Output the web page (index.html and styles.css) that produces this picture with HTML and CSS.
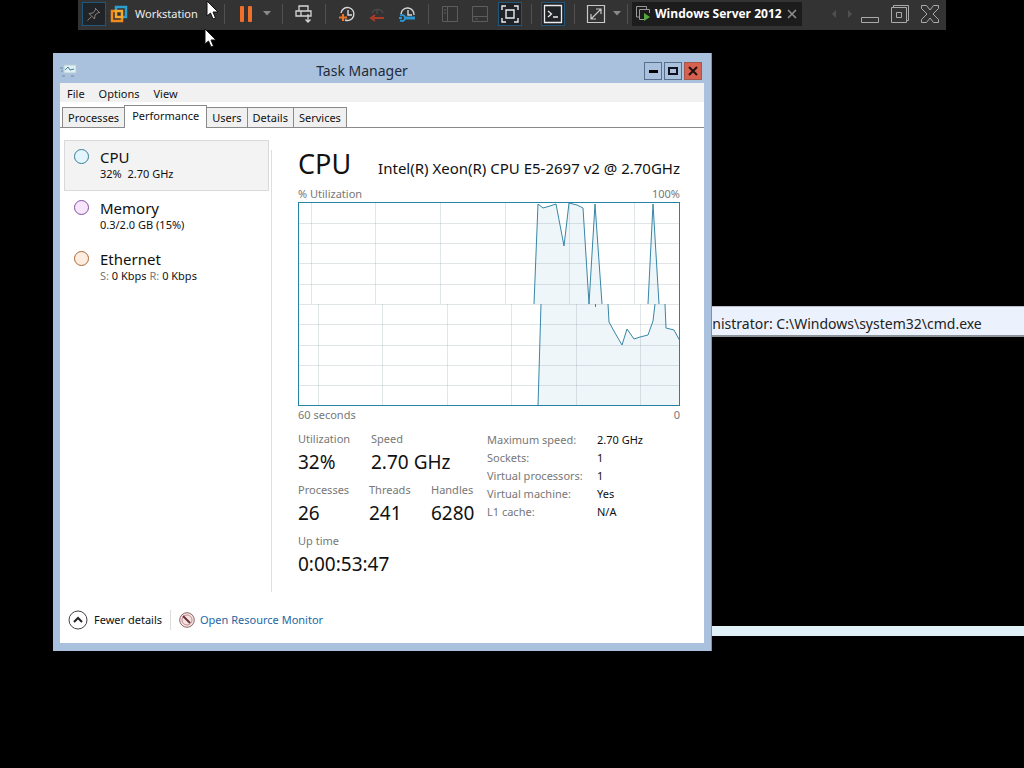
FILE: index.html
```html
<!DOCTYPE html>
<html lang="en">
<head>
<meta charset="utf-8">
<title>Task Manager</title>
<link rel="stylesheet" href="styles.css">
</head>
<body>
<main class="desktop">
  <header class="vmbar">
    <button class="tool tool-on" aria-label="Pin"><svg width="18" height="18" viewBox="0 0 18 18" fill="none" stroke="#8a8078"><path d="M10 3l5 5M11 4L8 8L4 8.500l5.500 5.500L10 10l4-3M6.500 11.500L2.500 15.500"/></svg></button>
    <button class="vm-menu"><svg width="18" height="18" viewBox="0 0 18 18" fill="none" stroke-width="2.500"><path d="M6 6V2h10v10h-4" stroke="#2a9fd0"/><path d="M6 6H2v10h10v-4" stroke="#f08a1c"/><path d="M6 6h6v6H6z" stroke="#f6a72c"/></svg>Workstation</button>
    <span class="sep"></span>
    <button class="tool" aria-label="Pause"><svg width="14" height="16" viewBox="0 0 14 16" fill="#f0702a"><rect x="1" width="4" height="16" rx="1"/><rect x="9" width="4" height="16" rx="1"/></svg></button>
    <button class="caret" aria-label="Power options"><svg width="8" height="5" viewBox="0 0 8 5"><path d="M0 0h8L4 4.500z" fill="#8a8a8a"/></svg></button>
    <span class="sep"></span>
    <button class="tool" aria-label="Send keys"><svg width="18" height="18" viewBox="0 0 18 18" fill="none" stroke="#d6d6d6" stroke-width="1.300"><path d="M4 6V1h9v5M1 6h15v5H1zM6 6v5M13 9v8M10.500 14.500L13 17l2.500-2.500"/></svg></button>
    <span class="sep"></span>
    <div class="tools">
      <button class="tool" aria-label="Take snapshot"><svg width="18" height="18" viewBox="0 0 18 18" fill="none" stroke="#d6d6d6" stroke-width="1.400"><path d="M3 8a6.500 6.500 0 1 1 4 7M10 5v5h4"/><path d="M1 12.500h8M5 9v7" stroke="#e8762c" stroke-width="2"/></svg></button>
      <button class="tool" aria-label="Revert snapshot"><svg width="18" height="18" viewBox="0 0 18 18" fill="none" stroke="#4c4c4c" stroke-width="1.200"><path d="M4 8a6 6 0 0 1 11 0M9 5v4"/><path d="M3 13h13M7 10l-4 3 4 3" stroke="#a93a28" stroke-width="2"/></svg></button>
      <button class="tool" aria-label="Manage snapshots"><svg width="18" height="18" viewBox="0 0 18 18" fill="none" stroke="#d6d6d6" stroke-width="1.400"><path d="M3 9a6.500 6.500 0 1 1 13 1M10 5v5h4"/><path d="M7 13h10" stroke="#2d96d2" stroke-width="3"/><path d="M2 10.500c3-1 5 0 5 2.500s-2 3.500-5 2.500M1 13h3" stroke="#2d96d2" stroke-width="2"/></svg></button>
    </div>
    <span class="sep"></span>
    <div class="tools">
      <button class="tool" aria-label="Library"><svg width="18" height="18" viewBox="0 0 18 18" fill="none" stroke="#5d5d5d"><path d="M1.500 1.500h15v15h-15zM6.500 1.500v15M3 5h2M3 8h2"/></svg></button>
      <button class="tool" aria-label="Thumbnail bar"><svg width="18" height="18" viewBox="0 0 18 18" fill="none" stroke="#5d5d5d"><path d="M1.500 1.500h15v15h-15zM1.500 11.500h15M4 14h3"/></svg></button>
      <button class="tool tool-on" aria-label="Full screen"><svg width="20" height="20" viewBox="0 0 20 20" fill="none" stroke="#ececec" stroke-width="1.400"><path d="M2 6V2h4M14 2h4v4M18 14v4h-4M6 18H2v-4M6 6h8v8H6z"/></svg></button>
    </div>
    <span class="sep"></span>
    <button class="tool tool-on" aria-label="Console"><svg width="20" height="20" viewBox="0 0 20 20" fill="none" stroke="#ececec" stroke-width="1.300"><path d="M1.500 1.500h17v17h-17zM5 7l3.500 3L5 13M10 13h5"/></svg></button>
    <span class="sep"></span>
    <button class="tool" aria-label="Stretch"><svg width="20" height="20" viewBox="0 0 20 20" fill="none" stroke="#c8c8c8" stroke-width="1.200"><path d="M1.500 1.500h17v17h-17zM5 15L15 5M10 5h5v5M5 10v5h5"/></svg></button>
    <button class="caret" aria-label="Stretch options"><svg width="8" height="5" viewBox="0 0 8 5"><path d="M0 0h8L4 4.500z" fill="#8a8a8a"/></svg></button>
    <span class="sep sep-tight"></span>
    <div class="vm-tab"><svg width="15" height="15" viewBox="0 0 15 15" fill="none" stroke="#999"><path d="M3 11H.500V.500h10V3"/><path d="M8 13.500H3.500v-10h10V7"/><path d="M8 7l6 4-6 4z" fill="#55a63a" stroke="none"/></svg><strong>Windows Server 2012</strong>
      <button class="tab-close" aria-label="Close tab"><svg width="10" height="10" viewBox="0 0 10 10" stroke="#8e8e8e" stroke-width="1.600"><path d="M1 1l8 8M9 1L1 9"/></svg></button></div>
    <div class="vm-window">
      <svg width="20" height="8" viewBox="0 0 20 8" fill="#505050"><path d="M4 0v8L0 4zM16 0v8l4-4z"/></svg>
      <button class="tool" aria-label="Minimize"><svg width="20" height="20" viewBox="0 0 20 20" fill="none" stroke="#aaa"><path d="M1.500 13.500h17v5h-17z"/></svg></button>
      <button class="tool" aria-label="Restore"><svg width="20" height="20" viewBox="0 0 20 20" fill="none" stroke="#aaa"><path d="M3.500 3.500v-2h15v15h-2M1.500 3.500h15v15h-15zM6.500 8.500h5v5h-5z"/></svg></button>
      <button class="tool" aria-label="Close"><svg width="20" height="20" viewBox="0 0 20 20" fill="none" stroke="#aaa"><path d="M1.500 1.500h5L10 6l3.500-4.500h5v3L13 10l5.500 5.500v3h-5L10 14l-3.500 4.500h-5v-3L7 10 1.500 4.500z"/></svg></button>
    </div>
  </header>

  <section class="cmd" aria-label="Command prompt"><h2 class="cmd-title">Administrator: C:\Windows\system32\cmd.exe</h2><div class="cmd-screen"></div></section>

  <section class="window" aria-label="Task Manager">
    <div class="titlebar">
      <svg width="17" height="14" viewBox="0 0 17 14" fill="none"><rect x="4" y="1" width="12" height="8" fill="#dff1f5" stroke="#b5ccd6"/><path d="M5 6l3-3 2 3 4-1" stroke="#477d8d"/><path d="M0 4h3M1 7h2M2 12h3M11 12h3" stroke="#758899"/></svg>
      <h1>Task Manager</h1>
      <div class="controls">
        <button class="control" aria-label="Minimize"><svg width="10" height="10" viewBox="0 0 10 10"><path d="M1 4h9v3H1z"/></svg></button>
        <button class="control" aria-label="Maximize"><svg width="10" height="10" viewBox="0 0 10 10" fill="none" stroke="#101020" stroke-width="2"><path d="M1 2h8v6H1z"/></svg></button>
        <button class="control control-close" aria-label="Close"><svg width="10" height="10" viewBox="0 0 10 10" stroke="#201010" stroke-width="2"><path d="M1 1l8 8M9 1L1 9"/></svg></button>
      </div>
    </div>
    <div class="client">
      <nav class="menu"><button>File</button><button>Options</button><button>View</button></nav>
      <div class="tabs" role="tablist">
        <button role="tab">Processes</button><button role="tab" aria-selected="true" class="selected">Performance</button><button role="tab">Users</button><button role="tab">Details</button><button role="tab">Services</button>
      </div>
      <div class="body">
        <div class="resources">
          <button class="resource active"><span class="dot dot-cpu"></span><span class="res-text"><span class="res-name">CPU</span><span class="res-info">32%&nbsp; 2.70 GHz</span></span></button>
          <button class="resource"><span class="dot dot-memory"></span><span class="res-text"><span class="res-name">Memory</span><span class="res-info">0.3/2.0 GB (15%)</span></span></button>
          <button class="resource"><span class="dot dot-net"></span><span class="res-text"><span class="res-name">Ethernet</span><span class="res-info"><i>S:</i> 0 Kbps <i>R:</i> 0 Kbps</span></span></button>
        </div>
        <div class="divider"></div>
        <div class="detail">
          <div class="heading"><h2>CPU</h2><p>Intel(R) Xeon(R) CPU E5-2697 v2 @ 2.70GHz</p></div>
          <div class="axis"><span>% Utilization</span><span>100%</span></div>
          <svg class="graph" viewBox="0 0 382 204" preserveAspectRatio="none" fill="none">
            <rect width="382" height="204" fill="#fff"/>
            <g fill="#eff6fa"><path d="M236 102L240 2L245 6L252 4L258 2L266 44L271 1L279 3L285 6L291 102L297 2L304 102zM350 102L355 2L361 102z"/><path d="M240 204L243 102H310L311 120L317 131L324 143L329 127L336 137L342 135L350 133L355 119L357 102H367L368 126L376 128L382 139V204z"/></g>
            <path stroke="#64828c" stroke-opacity=".2" d="M13.500 1v101M77.500 1v101M142.500 1v101M207.500 1v101M271.500 1v101M336.500 1v101M20.500 102v101M84.500 102v101M149.500 102v101M213.500 102v101M278.500 102v101M342.500 102v101M1 21.500h380M1 41.500h380M1 61.500h380M1 82.500h380M1 102.500h380M1 122.500h380M1 143.500h380M1 163.500h380M1 183.500h380"/>
            <path stroke="#3786a6" d="M236 102L240 2L245 6L252 4L258 2L266 44L271 1L279 3L285 6L291 102L297 2L304 102M297.500 102v3M350 102L355 2L361 102M240 204L243 102M310 102L311 120L317 131L324 143L329 127L336 137L342 135L350 133L355 119L357 102M367 102L368 126L376 128L382 139"/>
            <rect x=".5" y=".5" width="381" height="203" stroke="#2383a6"/>
          </svg>
          <div class="axis"><span>60 seconds</span><span>0</span></div>
          <div class="numbers">
            <div class="stats">
              <div class="stat-row"><div class="stat"><span>Utilization</span><b>32%</b></div><div class="stat"><span>Speed</span><b>2.70 GHz</b></div></div>
              <div class="stat-row"><div class="stat"><span>Processes</span><b>26</b></div><div class="stat stat-threads"><span>Threads</span><b>241</b></div><div class="stat"><span>Handles</span><b>6280</b></div></div>
              <div class="stat-row"><div class="stat"><span>Up time</span><b>0:00:53:47</b></div></div>
            </div>
            <dl class="facts"><dt>Maximum speed:</dt><dd>2.70 GHz</dd><dt>Sockets:</dt><dd>1</dd><dt>Virtual processors:</dt><dd>1</dd><dt>Virtual machine:</dt><dd>Yes</dd><dt>L1 cache:</dt><dd>N/A</dd></dl>
          </div>
        </div>
      </div>
      <footer class="footer">
        <button class="fewer"><svg width="20" height="20" viewBox="0 0 20 20" fill="none"><circle cx="10" cy="10" r="9" stroke="#444"/><path d="M6 12l4-4 4 4" stroke="#222" stroke-width="2"/></svg>Fewer details</button>
        <a class="monitor" href="#monitor"><svg width="16" height="16" viewBox="0 0 16 16" fill="none"><circle cx="8" cy="8" r="7.300" fill="#f4e4e4" stroke="#8d6868"/><circle cx="8" cy="8" r="5" stroke="#c58d8d"/><path d="M4 4l7 7" stroke="#702f38" stroke-width="2"/></svg>Open Resource Monitor</a>
      </footer>
    </div>
  </section>
  <svg class="cursor cursor-a" width="13" height="20" viewBox="0 0 13 20"><path d="M1 1v15l3.500-3 2.500 6 2.500-1-2.500-6h5z" fill="#fff" stroke="#111"/></svg>
  <svg class="cursor cursor-b" width="13" height="20" viewBox="0 0 13 20"><path d="M1 1v15l3.500-3 2.500 6 2.500-1-2.500-6h5z" fill="#fff" stroke="#111"/></svg>
</main>
</body>
</html>
```
FILE: styles.css
```css
* { box-sizing: border-box; }
body { margin: 0; background: #000; color: #111; font: 11px/16px "Noto Sans", "Open Sans", sans-serif; }
button { margin: 0; padding: 0; border: 0; background: none; color: inherit; font: inherit; }
h1, h2, p, dl, dd { margin: 0; font-weight: 400; }
svg { display: block; flex: none; }
.desktop { position: relative; min-height: 100vh; overflow: hidden; }

.vmbar { position: absolute; top: 0; left: 78px; right: 78px; display: flex; align-items: center; height: 30px; padding: 0 4px 3px; background: #333; color: #eee; }
.tool { display: flex; flex: none; align-items: center; justify-content: center; width: 24px; height: 24px; }
.tool-on { border: 1px solid #235779; background: #202428; }
.tools { display: flex; gap: 6px; }
.vm-menu { display: flex; align-items: center; gap: 7px; width: 109px; padding-left: 4px; }
.caret { display: flex; align-items: center; justify-content: center; width: 12px; height: 24px; margin-left: 3px; }
.sep { flex: none; width: 1px; height: 20px; margin: 0 9px; background: #505050; }
.sep-tight { margin: 0 4px; }
.vm-tab { display: flex; align-items: center; gap: 4px; width: 170px; height: 24px; padding: 0 5px 0 4px; background: #1c1c1c; color: #fff; white-space: nowrap; }
.vm-tab strong { font: 700 12px/16px "Open Sans", sans-serif; }
.tab-close { margin-left: auto; }
.vm-window { display: flex; align-items: center; gap: 6px; margin-left: auto; }

.cmd { position: absolute; top: 306px; left: 674px; right: 0; }
.cmd-title { height: 31px; padding: 2px 4px; border-top: 1px solid #b9bfca; border-bottom: 2px solid #8c949c; background: #ecf2fd; color: #222; font-size: 14px; line-height: 30px; white-space: nowrap; }
.cmd-screen { height: 299px; border-bottom: 10px solid #e0f2f8; }

.window { position: absolute; top: 53px; left: 53px; right: 312px; padding: 0 7px 8px; border-right: 1px solid #7f93ac; background: #a9c1dc; }
.titlebar { display: grid; grid-template-columns: 20px 1fr 60px; align-items: center; height: 30px; padding-top: 6px; }
.titlebar h1 { color: #222b3a; font-size: 14px; line-height: 20px; text-align: center; }
.controls { display: flex; gap: 2px; }
.control { display: flex; align-items: center; justify-content: center; width: 18px; height: 18px; border: 1px solid #58708f; }
.control-close { border-color: #a5564c; background: #d8604f; }
.client { background: #fff; }
.menu { display: flex; gap: 14px; height: 19px; padding: 2px 7px 0; background: #f1f1f1; }
.menu button { line-height: 16px; }
.tabs { display: flex; align-items: flex-end; height: 26px; padding-left: 2px; border-bottom: 1px solid #8a8a8a; }
.tabs button { height: 20px; padding: 0 5px; border: 1px solid #8a8a8a; border-bottom: 0; border-left-width: 0; background: #f0f0f0; }
.tabs button:first-child { border-left-width: 1px; border-right-width: 0; }
.tabs .selected { height: 23px; margin-bottom: -1px; padding: 0 7px 2px; border-left-width: 1px; background: #fff; }

.body { display: flex; padding: 12px 24px 0 4px; }
.resources { width: 205px; flex: none; }
.resource { display: flex; gap: 11px; width: 100%; height: 51px; padding: 7px 9px; border: 1px solid transparent; text-align: left; }
.active { border-color: #d9d9d9; background: #f3f3f3; }
.dot { width: 15px; height: 15px; margin-top: 1px; border: 1px solid; border-radius: 50%; }
.dot-cpu { border-color: #387c98; background: #e4f6fd; }
.dot-memory { border-color: #84509a; background: #f7e5fb; }
.dot-net { border-color: #a5683c; background: #feeddf; }
.res-text { display: flex; flex-direction: column; }
.res-name { font-size: 15px; line-height: 18px; }
.res-info { line-height: 16px; }
.res-info i { color: #777; font-style: normal; }
.divider { width: 1px; margin: 10px 26px 0 2px; background: #dedede; }
.detail { flex: 1; min-width: 0; height: 452px; }
.heading { display: flex; align-items: baseline; justify-content: space-between; height: 45px; white-space: nowrap; }
.heading h2 { font-size: 27px; line-height: 47px; }
.heading p { font-size: 15px; line-height: 24px; }
.axis { display: flex; justify-content: space-between; color: #777; line-height: 17px; }
.graph { width: 100%; height: 204px; }
.numbers { display: flex; justify-content: space-between; padding-top: 8px; }
.stats { width: 189px; }
.stat-row { display: grid; grid-template-columns: 73px 60px 1fr; height: 51px; }
.stat span { display: block; color: #777; line-height: 16px; }
.stat b { display: block; font-size: 19px; font-weight: 400; line-height: 30px; white-space: nowrap; }
.stat-threads { margin-left: -2px; }
.facts { display: grid; grid-template-columns: 110px 83px; align-content: start; line-height: 18px; }
.facts dt { color: #777; white-space: nowrap; }
.footer { display: flex; align-items: center; height: 51px; padding: 5px 8px 0; }
.fewer { display: flex; align-items: center; gap: 6px; padding-right: 8px; border-right: 1px solid #ddd; }
.monitor { display: flex; align-items: center; gap: 5px; margin-left: 8px; color: #1c66a4; text-decoration: none; }

.cursor { position: absolute; }
.cursor-a { top: 0; left: 206px; }
.cursor-b { top: 28px; left: 204px; }
```
